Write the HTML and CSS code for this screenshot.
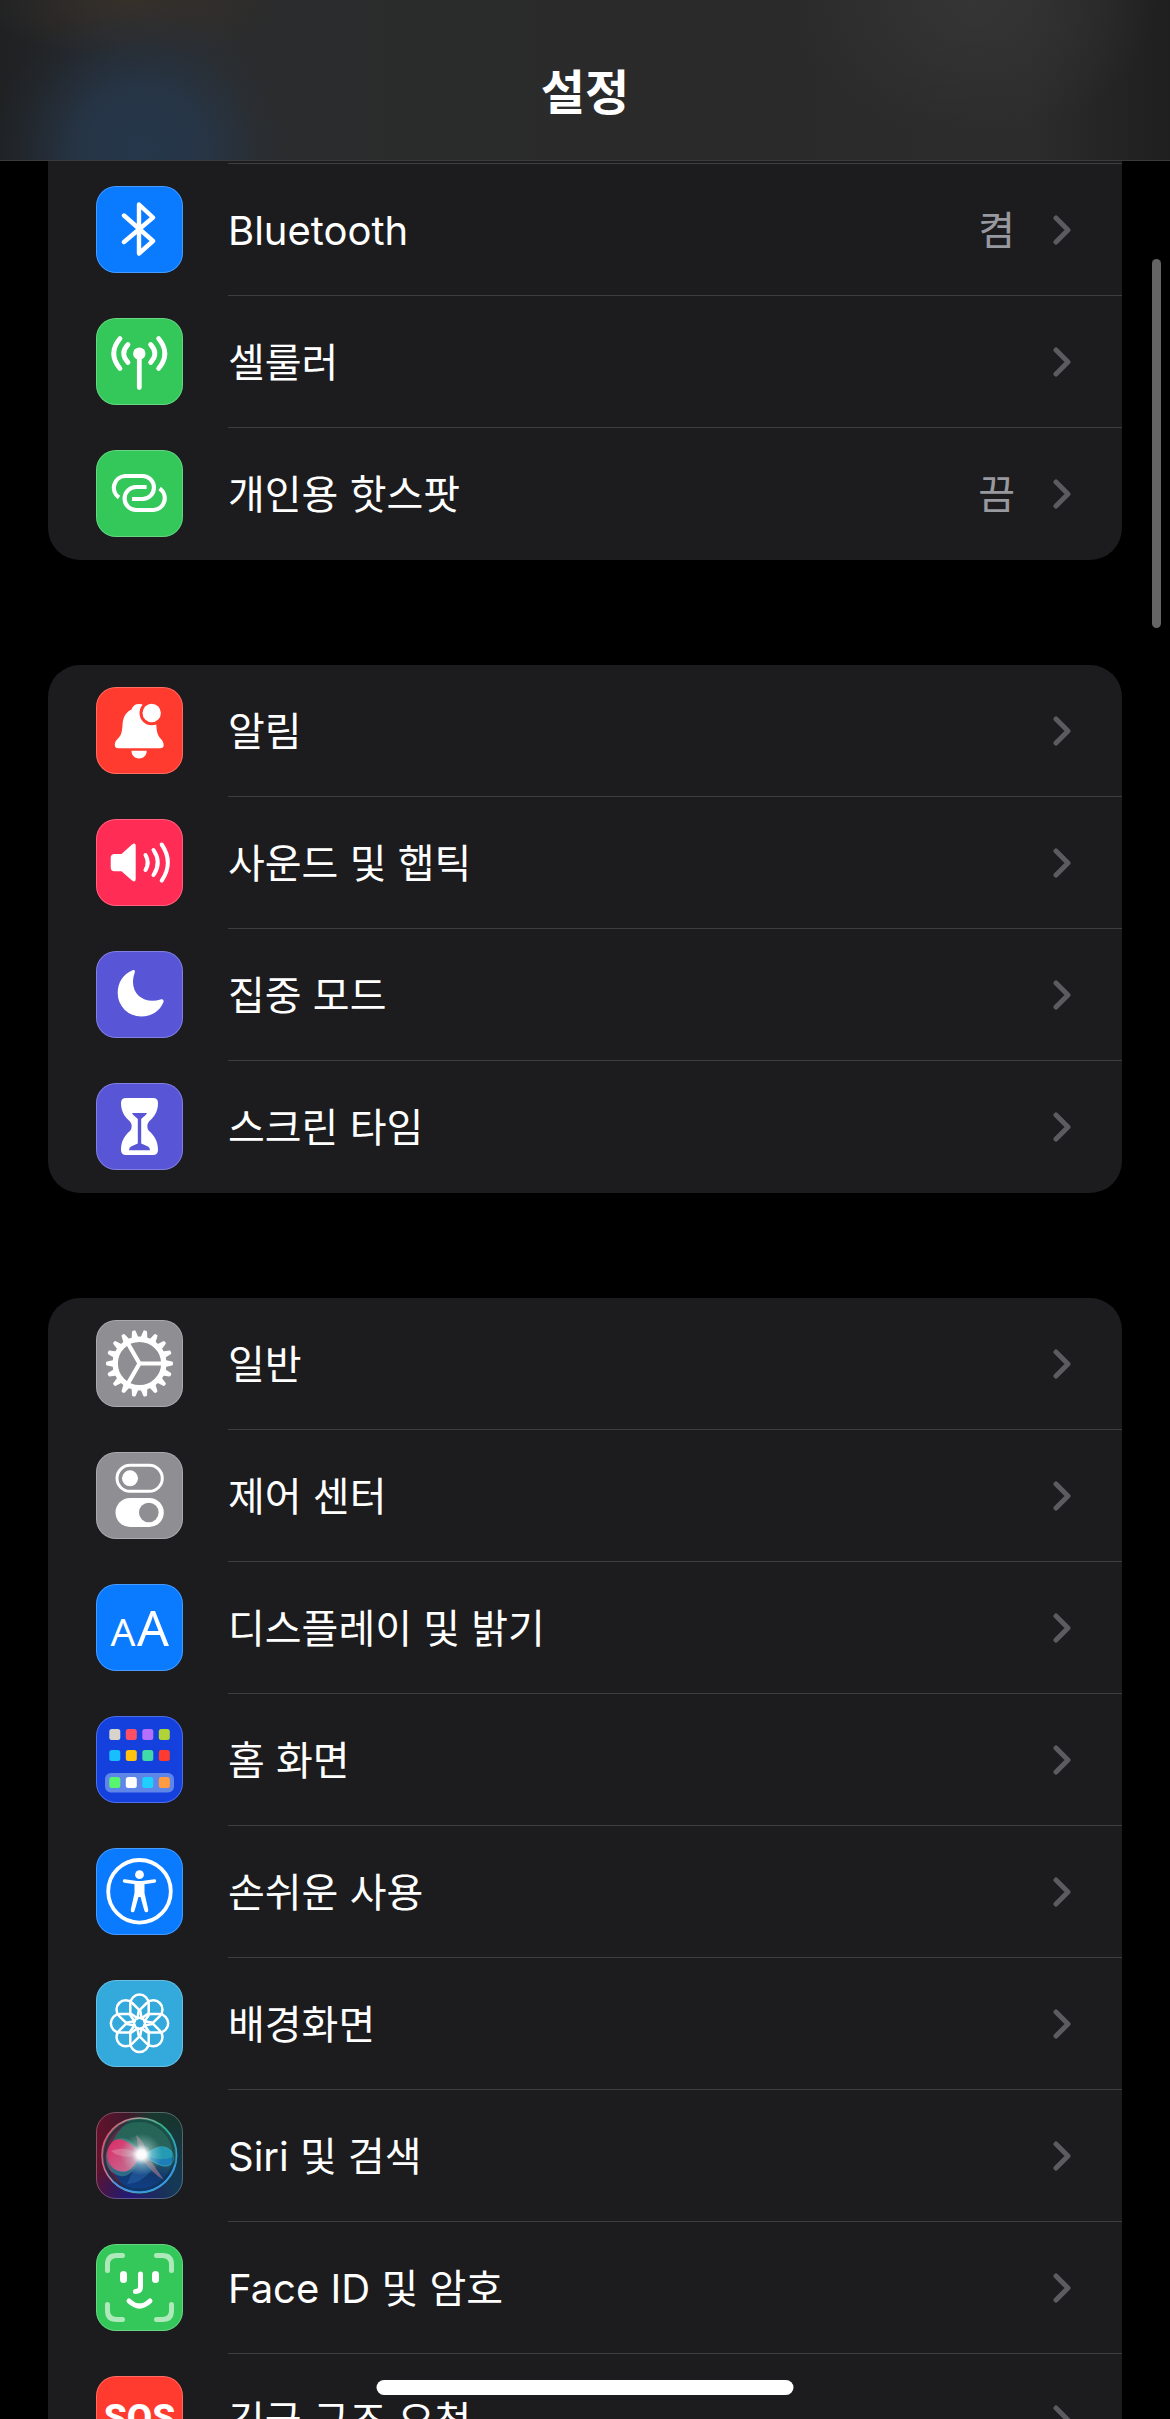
FILE: index.html
```
<!DOCTYPE html>
<html lang="ko">
<head>
    <title>설정</title>
    <meta charset="UTF-8">
    <meta name="viewport" content="width=device-width, initial-scale=1.0">
    <link rel="stylesheet" href="styles.css">
</head>
<body>
    <header class="header">
        <h1>설정</h1>
    </header>

    <main class="settings">
        <nav class="group group-cut" aria-label="연결">
            <div class="row-tail"></div>
            <a class="row" href="#bluetooth">
                <svg class="icon blue" viewBox="0 0 87 87" aria-hidden="true">
                    <path class="line" stroke-width="4.4" d="M28 29.5L57 55L43 67.5V18.5L57 31.5L28 56"/>
                </svg>
                <span class="row-body">
                    <span class="label">Bluetooth</span>
                    <span class="value">켬</span>
                    <svg class="chevron" viewBox="0 0 18 30" aria-hidden="true"><path d="M3 3L15 15L3 27"/></svg>
                </span>
            </a>
            <a class="row" href="#cellular">
                <svg class="icon green" viewBox="0 0 87 87" aria-hidden="true">
                    <circle class="solid" cx="43.3" cy="35.7" r="6.2"/>
                    <path class="line" stroke-width="4.8" d="M43.3 38V69.5M32 26.5Q23.5 35.5 32 44.5M54.6 26.5Q63.1 35.5 54.6 44.5M24 20.5Q11.5 35.5 24 50.5M62.6 20.5Q75.1 35.5 62.6 50.5"/>
                </svg>
                <span class="row-body">
                    <span class="label">셀룰러</span>
                    <svg class="chevron" viewBox="0 0 18 30" aria-hidden="true"><path d="M3 3L15 15L3 27"/></svg>
                </span>
            </a>
            <a class="row" href="#hotspot">
                <svg class="icon green" viewBox="0 0 87 87" aria-hidden="true">
                    <path class="line butt" stroke-width="4.2" d="M23 47.5A11.8 11.8 0 0 1 29 26H46.5A11.5 11.5 0 0 1 46.5 49H36M63.6 38.5A11.8 11.8 0 0 1 57.6 60H40.1A11.5 11.5 0 0 1 40.1 37H50.6"/>
                </svg>
                <span class="row-body">
                    <span class="label">개인용 핫스팟</span>
                    <span class="value">끔</span>
                    <svg class="chevron" viewBox="0 0 18 30" aria-hidden="true"><path d="M3 3L15 15L3 27"/></svg>
                </span>
            </a>
        </nav>

        <nav class="group" aria-label="알림 및 집중">
            <a class="row" href="#notifications">
                <svg class="icon red" viewBox="0 0 87 87" aria-hidden="true">
                    <path class="solid" d="M43 17C39 17 36.5 19 35.5 22.5C29 25.5 27 31 26.5 38C26 46 25 48.5 21.5 52C19.5 54 18.8 56 18.8 58Q18.8 61.2 22.5 61.2H64Q67.7 61.2 67.7 58C67.7 56 66.8 54 65 52C61.5 48.5 60.8 45 60.3 38C60 30 57 25.5 50.5 22.5C49.5 19 47 17 43 17ZM35.5 63.8H50.7C50.7 68.5 47.5 71.5 43.1 71.5S35.5 68.5 35.5 63.8Z"/>
                    <circle class="cut" cx="55.7" cy="26" r="12.2"/>
                    <circle class="solid" cx="55.7" cy="26" r="9.2"/>
                </svg>
                <span class="row-body">
                    <span class="label">알림</span>
                    <svg class="chevron" viewBox="0 0 18 30" aria-hidden="true"><path d="M3 3L15 15L3 27"/></svg>
                </span>
            </a>
            <a class="row" href="#sounds">
                <svg class="icon pink" viewBox="0 0 87 87" aria-hidden="true">
                    <path class="solid" d="M18.5 35H25.5L36 25.5Q39.7 23 39.7 27V60Q39.7 64 36 61.5L25.5 52.3H18.5Q14.7 52.3 14.7 48.5V38.8Q14.7 35 18.5 35Z"/>
                    <path class="line" stroke-width="4" d="M49.5 36Q54 43.5 49.5 51M57.5 31Q66 43.5 57.5 56M65.7 25.5Q78 43.5 65.7 61.7"/>
                </svg>
                <span class="row-body">
                    <span class="label">사운드 및 햅틱</span>
                    <svg class="chevron" viewBox="0 0 18 30" aria-hidden="true"><path d="M3 3L15 15L3 27"/></svg>
                </span>
            </a>
            <a class="row" href="#focus">
                <svg class="icon indigo" viewBox="0 0 87 87" aria-hidden="true">
                    <path class="solid" d="M36.5 19.3C27 23 21.7 32 21.7 42A23.5 23.5 0 0 0 45.3 65.6C55.5 65.6 64 60 67.4 51.3C68.2 48.8 66.5 47.6 64.5 48.5C50 53 37 45 37 31C37 27 37.8 24.5 38.7 21.7C39.3 19.5 38.5 18.5 36.5 19.3Z"/>
                </svg>
                <span class="row-body">
                    <span class="label">집중 모드</span>
                    <svg class="chevron" viewBox="0 0 18 30" aria-hidden="true"><path d="M3 3L15 15L3 27"/></svg>
                </span>
            </a>
            <a class="row" href="#screentime">
                <svg class="icon indigo" viewBox="0 0 87 87" aria-hidden="true">
                    <path class="solid" d="M30 15H57Q62 15 62 20C62 29 58 34 53 38.5Q49.5 43.3 53 48C58 52 62 58 62 67Q62 72 57 72H30Q25 72 25 67C25 58 29 52 34 48Q37.5 43.3 34 38.5C29 34 25 29 25 20Q25 15 30 15Z"/>
                    <path class="cut" d="M36 30H51C50.5 32 47 34 45.2 36V60.5L52 63.5Q54 64.5 54 67.3H33Q33 64.5 35 63.5L41.8 60.5V36C40 34 36.5 32 36 30Z"/>
                </svg>
                <span class="row-body">
                    <span class="label">스크린 타임</span>
                    <svg class="chevron" viewBox="0 0 18 30" aria-hidden="true"><path d="M3 3L15 15L3 27"/></svg>
                </span>
            </a>
        </nav>

        <nav class="group" aria-label="일반">
            <a class="row" href="#general">
                <svg class="icon gray" viewBox="0 0 87 87" aria-hidden="true">
                    <defs>
                        <path id="teeth" d="M40 18L41.6 11Q41.8 10 42.8 10H44.2Q45.2 10 45.4 11L47 18ZM40 69L41.6 76Q41.8 77 42.8 77H44.2Q45.2 77 45.4 76L47 69Z"/>
                    </defs>
                    <g class="solid">
                        <use href="#teeth" transform="rotate(10 43.5 43.5)"/>
                        <use href="#teeth" transform="rotate(30 43.5 43.5)"/>
                        <use href="#teeth" transform="rotate(50 43.5 43.5)"/>
                        <use href="#teeth" transform="rotate(70 43.5 43.5)"/>
                        <use href="#teeth" transform="rotate(90 43.5 43.5)"/>
                        <use href="#teeth" transform="rotate(110 43.5 43.5)"/>
                        <use href="#teeth" transform="rotate(130 43.5 43.5)"/>
                        <use href="#teeth" transform="rotate(150 43.5 43.5)"/>
                        <use href="#teeth" transform="rotate(170 43.5 43.5)"/>
                    </g>
                    <circle class="line" stroke-width="5.4" cx="43.5" cy="43.5" r="24.3"/>
                    <path class="line" stroke-width="4.2" d="M43.5 43.5H67M43.5 43.5L31.8 23.2M43.5 43.5L31.8 63.8"/>
                </svg>
                <span class="row-body">
                    <span class="label">일반</span>
                    <svg class="chevron" viewBox="0 0 18 30" aria-hidden="true"><path d="M3 3L15 15L3 27"/></svg>
                </span>
            </a>
            <a class="row" href="#control-center">
                <svg class="icon gray" viewBox="0 0 87 87" aria-hidden="true">
                    <rect class="line" stroke-width="3" x="21" y="13.3" width="45.3" height="26" rx="13"/>
                    <circle class="solid" cx="34" cy="26.3" r="8"/>
                    <rect class="solid" x="19.5" y="46" width="48.3" height="29" rx="14.5"/>
                    <circle class="cut" cx="52.8" cy="60.5" r="9.8"/>
                </svg>
                <span class="row-body">
                    <span class="label">제어 센터</span>
                    <svg class="chevron" viewBox="0 0 18 30" aria-hidden="true"><path d="M3 3L15 15L3 27"/></svg>
                </span>
            </a>
            <a class="row" href="#display">
                <svg class="icon blue" viewBox="0 0 87 87" aria-hidden="true">
                    <text class="glyph-a" x="27" y="62" font-size="39">A</text>
                    <text class="glyph-a" x="57" y="62" font-size="50">A</text>
                </svg>
                <span class="row-body">
                    <span class="label">디스플레이 및 밝기</span>
                    <svg class="chevron" viewBox="0 0 18 30" aria-hidden="true"><path d="M3 3L15 15L3 27"/></svg>
                </span>
            </a>
            <a class="row" href="#home-screen">
                <svg class="icon navy" viewBox="0 0 87 87" aria-hidden="true">
                    <rect x="9" y="57" width="69" height="19.5" rx="6" fill="#5e86e8"/>
                    <rect x="13.3" y="13" width="11" height="11" rx="2.5" fill="#d8d4cc"/>
                    <rect x="29.8" y="13" width="11" height="11" rx="2.5" fill="#ff4f64"/>
                    <rect x="46.3" y="13" width="11" height="11" rx="2.5" fill="#b670ff"/>
                    <rect x="62.8" y="13" width="11" height="11" rx="2.5" fill="#b0d335"/>
                    <rect x="13.3" y="34" width="11" height="11" rx="2.5" fill="#18bfff"/>
                    <rect x="29.8" y="34" width="11" height="11" rx="2.5" fill="#ffc20e"/>
                    <rect x="46.3" y="34" width="11" height="11" rx="2.5" fill="#3fdaa8"/>
                    <rect x="62.8" y="34" width="11" height="11" rx="2.5" fill="#ff3a2e"/>
                    <rect x="13.3" y="61" width="11" height="11" rx="2.5" fill="#58f56e"/>
                    <rect x="29.8" y="61" width="11" height="11" rx="2.5" fill="#fff"/>
                    <rect x="46.3" y="61" width="11" height="11" rx="2.5" fill="#1fcfff"/>
                    <rect x="62.8" y="61" width="11" height="11" rx="2.5" fill="#ff9c42"/>
                </svg>
                <span class="row-body">
                    <span class="label">홈 화면</span>
                    <svg class="chevron" viewBox="0 0 18 30" aria-hidden="true"><path d="M3 3L15 15L3 27"/></svg>
                </span>
            </a>
            <a class="row" href="#accessibility">
                <svg class="icon blue" viewBox="0 0 87 87" aria-hidden="true">
                    <circle class="line" stroke-width="3.8" cx="43.5" cy="43.3" r="31.3"/>
                    <circle class="solid" cx="43.5" cy="26.7" r="4.4"/>
                    <path class="line" stroke-width="3.4" d="M28.5 33L41 34.8H46L58.5 33"/>
                    <path class="solid" d="M38.5 34H48.5V45L52.2 61.5Q52.6 64 50.8 64.3Q49 64.6 48.3 62.5L44.5 49H42.5L38.7 62.5Q38 64.6 36.2 64.3Q34.4 64 34.8 61.5L38.5 45Z"/>
                </svg>
                <span class="row-body">
                    <span class="label">손쉬운 사용</span>
                    <svg class="chevron" viewBox="0 0 18 30" aria-hidden="true"><path d="M3 3L15 15L3 27"/></svg>
                </span>
            </a>
            <a class="row" href="#wallpaper">
                <svg class="icon cyan" viewBox="0 0 87 87" aria-hidden="true">
                    <defs>
                        <path id="petal" d="M-2 -5L-9.2 -10V-19.5A9.2 9.2 0 0 1 9.2 -19.5V-10L2 -5"/>
                    </defs>
                    <g class="line" stroke-width="2.5" transform="translate(43.5 43.3)">
                        <use href="#petal"/>
                        <use href="#petal" transform="rotate(45)"/>
                        <use href="#petal" transform="rotate(90)"/>
                        <use href="#petal" transform="rotate(135)"/>
                        <use href="#petal" transform="rotate(180)"/>
                        <use href="#petal" transform="rotate(225)"/>
                        <use href="#petal" transform="rotate(270)"/>
                        <use href="#petal" transform="rotate(315)"/>
                        <circle r="5.5"/>
                    </g>
                </svg>
                <span class="row-body">
                    <span class="label">배경화면</span>
                    <svg class="chevron" viewBox="0 0 18 30" aria-hidden="true"><path d="M3 3L15 15L3 27"/></svg>
                </span>
            </a>
            <a class="row" href="#siri">
                <svg class="icon siri" viewBox="0 0 87 87" aria-hidden="true">
                    <defs>
                        <linearGradient id="ring" x1="0" y1="0.3" x2="1" y2="0.6">
                            <stop offset="0" stop-color="#e0506e"/>
                            <stop offset="0.35" stop-color="#a8a09c"/>
                            <stop offset="0.7" stop-color="#2fb98a"/>
                            <stop offset="1" stop-color="#2fa0d8"/>
                        </linearGradient>
                        <linearGradient id="orb" x1="0.6" y1="0" x2="0.5" y2="1">
                            <stop offset="0" stop-color="#236653"/>
                            <stop offset="0.5" stop-color="#2c625e"/>
                            <stop offset="0.75" stop-color="#123a70"/>
                            <stop offset="1" stop-color="#10408c"/>
                        </linearGradient>
                        <radialGradient id="flare">
                            <stop offset="0" stop-color="#fff"/>
                            <stop offset="0.22" stop-color="#fff" stop-opacity="0.95"/>
                            <stop offset="0.5" stop-color="#cfeeee" stop-opacity="0.4"/>
                            <stop offset="1" stop-color="#9adccc" stop-opacity="0"/>
                        </radialGradient>
                        <linearGradient id="lobe" x1="0" y1="0" x2="1" y2="1">
                            <stop offset="0" stop-color="#ef1f63"/>
                            <stop offset="1" stop-color="#cf7c9c"/>
                        </linearGradient>
                    </defs>
                    <circle cx="43.3" cy="43.3" r="37" fill="url(#orb)"/>
                    <path d="M8 38A36 36 0 0 1 33 9C22 18 17 27 13 38Q10 56 30 76A36 36 0 0 1 8 38Z" fill="#6a1c40" opacity="0.8"/>
                    <path d="M46 43C36 25 22 20 13 35S14 62 24 64S40 56 46 43Z" fill="#4fa8a4" opacity="0.45"/>
                    <path d="M46 43C35 30 21 21 14 33S14 58 25 59.500S38 52 46 43Z" fill="url(#lobe)" opacity="0.9"/>
                    <path d="M46 43C34 38 28 34 15 39Q26 48 46 43Z" fill="#e6a8b8" opacity="0.4"/>
                    <path d="M47 43C57 38 62 33 70 35.500C79 39 79 48 75 52C69 57 60 52 47 43Z" fill="#1c84c8" opacity="0.85" stroke="#35b4d0" stroke-width="1"/>
                    <path d="M47 43C57 38 62 34 70 36C75 38 78 41 77 45C66 49 58 47 47 43Z" fill="#2bb5ae" opacity="0.5"/>
                    <path d="M40 23Q49 29 50 42L68 68Q54 60 44 44Z" fill="#c78a9a" opacity="0.5"/>
                    <path d="M43 45L31 72Q44 72 56 58Z" fill="#2c6cb8" opacity="0.45"/>
                    <circle cx="45.5" cy="42.5" r="21" fill="url(#flare)"/>
                    <circle cx="43.3" cy="43.3" r="34.5" fill="none" stroke="#0a2c34" stroke-opacity="0.4" stroke-width="2.5"/>
                    <circle cx="43.3" cy="43.3" r="37.3" fill="none" stroke="url(#ring)" stroke-width="1.6"/>
                    <path d="M17 69.5A37.3 37.3 0 0 0 79 53" fill="none" stroke="#3d96e8" stroke-width="1.6"/>
                </svg>
                <span class="row-body">
                    <span class="label">Siri 및 검색</span>
                    <svg class="chevron" viewBox="0 0 18 30" aria-hidden="true"><path d="M3 3L15 15L3 27"/></svg>
                </span>
            </a>
            <a class="row" href="#face-id">
                <svg class="icon green" viewBox="0 0 87 87" aria-hidden="true">
                    <path class="line faint" stroke-width="5" d="M11.5 26.5V20.5Q11.5 11.5 20.5 11.5H26.5M60.5 11.5H66.5Q75.5 11.5 75.5 20.5V26.5M75.5 60.5V66.5Q75.5 75.5 66.5 75.5H60.5M26.5 75.5H20.5Q11.5 75.5 11.5 66.5V60.5"/>
                    <path class="line" stroke-width="7" d="M27.5 30.5V35.5M59.5 30.5V35.5"/>
                    <path class="line" stroke-width="5" d="M44.5 30V43Q44.5 47.5 39.5 47.5"/>
                    <path class="line" stroke-width="5" d="M33 57Q43.5 67 54 57"/>
                </svg>
                <span class="row-body">
                    <span class="label">Face ID 및 암호</span>
                    <svg class="chevron" viewBox="0 0 18 30" aria-hidden="true"><path d="M3 3L15 15L3 27"/></svg>
                </span>
            </a>
            <a class="row" href="#sos">
                <svg class="icon red" viewBox="0 0 87 87" aria-hidden="true">
                    <text class="glyph-sos" x="43.5" y="54" font-size="37">SOS</text>
                </svg>
                <span class="row-body">
                    <span class="label">긴급 구조 요청</span>
                    <svg class="chevron" viewBox="0 0 18 30" aria-hidden="true"><path d="M3 3L15 15L3 27"/></svg>
                </span>
            </a>
        </nav>
    </main>

    <div class="scrollbar"></div>
    <div class="home-indicator"></div>
</body>
</html>
```
FILE: styles.css
```
:root {
    --group: #1c1c1e;
    --separator: #3d3d40;
    --secondary: #98989f;
    --chevron: #5b5b60;
}

* {
    box-sizing: border-box;
}

body {
    margin: 0;
    height: 100vh;
    overflow: hidden;
    background: #000;
    color: #fff;
    font-family: Inter, "Noto Sans CJK KR", sans-serif;
    font-size: 40px;
    line-height: 60px;
}

.header {
    padding: 63px 0 37px;
    border-bottom: 1px solid #3a3a3c;
    background:
        radial-gradient(ellipse 150px 150px at 140px 150px, #26374b 0%, rgba(38, 55, 75, 0.85) 40%, rgba(38, 55, 75, 0.25) 75%, rgba(38, 55, 75, 0) 100%),
        radial-gradient(ellipse 150px 60px at 130px 0, #37302a 0%, rgba(55, 48, 42, 0) 100%),
        radial-gradient(ellipse 180px 140px at 975px 0, #353535 0%, rgba(53, 53, 53, 0) 100%),
        linear-gradient(90deg, #1f2123 0%, #2b2c2d 18%, #2a2a2a 60%, #2c2c2c 88%, #1f1f1f 100%);
}

.header h1 {
    margin: 0;
    font-size: 48px;
    font-weight: 600;
    line-height: 60px;
    text-align: center;
}

.settings {
    display: flex;
    flex-direction: column;
    gap: 105px;
    padding: 0 48px;
}

.group {
    border-radius: 32px;
    background: var(--group);
    overflow: hidden;
    flex-shrink: 0;
}

/* 헤더 아래로 이어지는 그룹 */
.group-cut {
    border-top-left-radius: 0;
    border-top-right-radius: 0;
}

.row-tail {
    height: 3px;
    margin-left: 180px;
    border-bottom: 1px solid var(--separator);
}

.row {
    display: flex;
    gap: 45px;
    height: 132px;
    padding-left: 48px;
    color: inherit;
    text-decoration: none;
}

.row-body {
    display: flex;
    flex: 1;
    align-items: center;
    padding-right: 51px;
    border-bottom: 1px solid var(--separator);
}

.row:last-child .row-body {
    border-bottom-color: transparent;
}

.label,
.value {
    padding-top: 3px;
}

.label {
    flex: 1;
}

.value {
    margin-right: 38px;
    color: var(--secondary);
}

.chevron {
    width: 18px;
    height: 30px;
    fill: none;
    stroke: var(--chevron);
    stroke-width: 5;
    stroke-linecap: round;
    stroke-linejoin: round;
}

.icon {
    width: 87px;
    height: 87px;
    margin-top: 22px;
    border-radius: 20px;
    background: var(--tile);
    outline: 1px solid rgba(255, 255, 255, 0.25);
    outline-offset: -1px;
}

.blue { --tile: #0a7aff; }
.green { --tile: #34c759; }
.red { --tile: #ff3b30; }
.pink { --tile: #ff2d55; }
.indigo { --tile: #5856d6; }
.gray { --tile: #8e8e93; }
.navy { --tile: #1440dd; }
.cyan { --tile: #34aadc; }

.siri {
    background:
        radial-gradient(circle at 40% 100%, #241a78 0%, rgba(36, 26, 120, 0) 45%),
        radial-gradient(circle at 100% 90%, #143a5c 0%, rgba(20, 58, 92, 0) 60%),
        linear-gradient(90deg, #64122c 0%, #40182a 35%, #17382f 65%, #17342f 100%);
}

.solid {
    fill: #fff;
}

.cut {
    fill: var(--tile);
}

.line {
    fill: none;
    stroke: #fff;
    stroke-linecap: round;
    stroke-linejoin: round;
}

.butt {
    stroke-linecap: butt;
}

.faint {
    stroke: #ade9ba;
}

.glyph-a {
    fill: #fff;
    font-family: "Noto Sans", sans-serif;
    font-weight: 400;
    text-anchor: middle;
}

.glyph-sos {
    fill: #fff;
    font-family: Roboto, sans-serif;
    font-weight: 800;
    text-anchor: middle;
}

/* 목록 위에 떠 있는 시스템 표시 */
.scrollbar {
    position: fixed;
    top: 259px;
    right: 9px;
    width: 9px;
    height: 369px;
    border-radius: 5px;
    background: #656565;
}

.home-indicator {
    position: fixed;
    bottom: 24px;
    left: 50%;
    width: 417px;
    height: 15px;
    border-radius: 8px;
    background: #fff;
    transform: translateX(-50%);
}
```
